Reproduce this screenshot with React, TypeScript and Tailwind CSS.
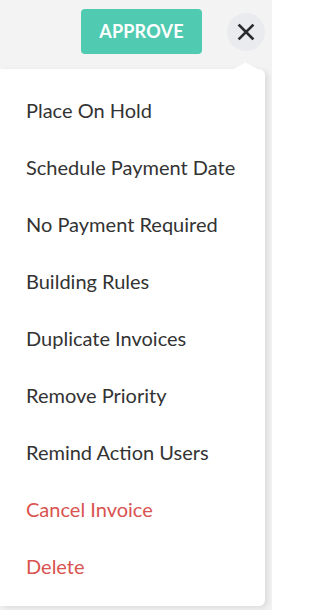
import React from 'react';

const actions = [
    { label: 'Place On Hold' },
    { label: 'Schedule Payment Date' },
    { label: 'No Payment Required' },
    { label: 'Building Rules' },
    { label: 'Duplicate Invoices' },
    { label: 'Remove Priority' },
    { label: 'Remind Action Users' },
    { label: 'Cancel Invoice', danger: true },
    { label: 'Delete', danger: true },
];

const App = () => {
    return (
        <div className="w-[272px] h-[610px] overflow-hidden bg-[#f3f3f3] font-['Lato','Liberation_Sans',sans-serif]">
            <div className="flex items-center justify-end pt-[9px] pr-[7px] gap-[25px]">
                <button className="w-[121px] h-[45px] rounded-[4px] bg-[#50cbb1] text-white text-[18px] font-bold tracking-[0.2px]">
                    APPROVE
                </button>
                <button className="w-[38px] h-[38px] rounded-full bg-[#e9ebee] flex items-center justify-center text-[#2b2b2b]">
                    <svg width="18" height="18" viewBox="0 0 18 18" fill="none" stroke="currentColor" strokeWidth="2.6" strokeLinecap="square">
                        <path d="M2.5 2.5 L15.5 15.5 M15.5 2.5 L2.5 15.5" />
                    </svg>
                </button>
            </div>
            <div className="relative mt-[15px] mr-[7px] bg-white rounded-r-[6px] shadow-[3px_2px_6px_rgba(0,0,0,0.1)] pt-[12px] pb-[12px]">
                <svg className="absolute -top-[7px] right-[5px]" width="28" height="8" viewBox="0 0 28 8">
                    <path d="M0 8 L13.5 0.5 L27 8 Z" fill="#ffffff" />
                </svg>
                {actions.map((action, index) => (
                    <div
                        key={index}
                        className={`h-[57px] flex items-center pl-[26px] text-[20px] ${action.danger ? 'text-[#d9534f]' : 'text-[#333333]'}`}
                    >
                        {action.label}
                    </div>
                ))}
            </div>
        </div>
    );
};

export default App;
